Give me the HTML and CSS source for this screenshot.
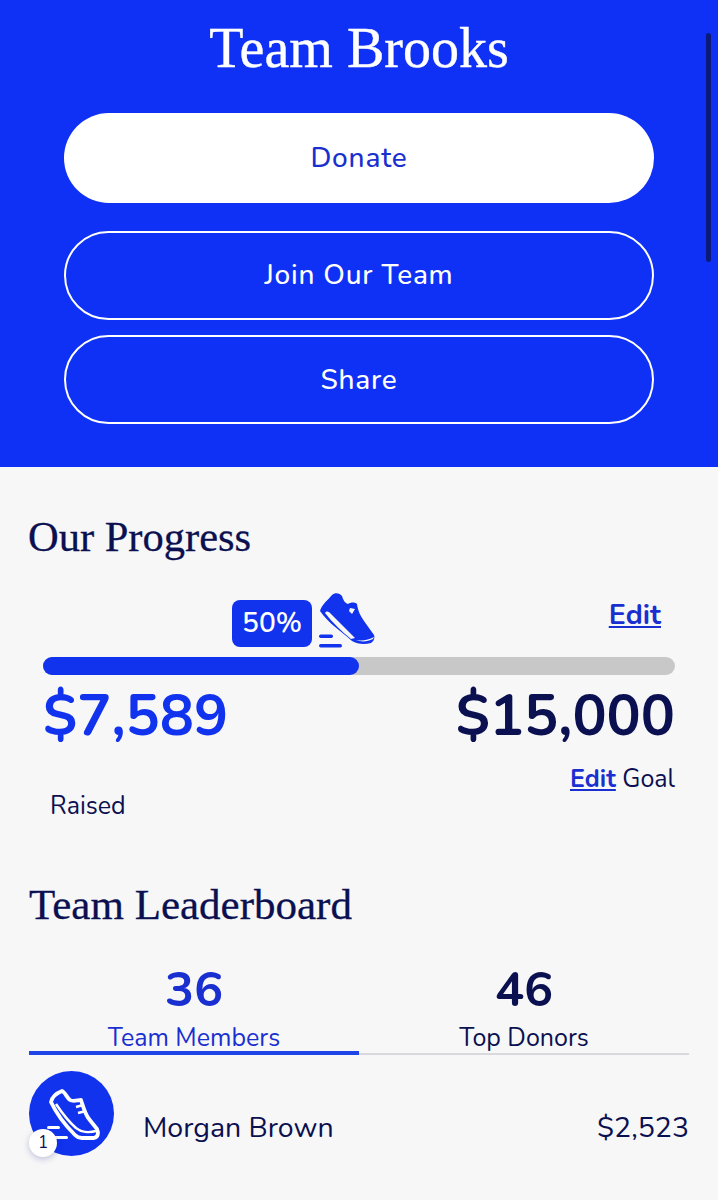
FILE: index.html
```html
<!DOCTYPE html>
<html lang="en">
<head>
<meta charset="utf-8">
<title>Team Brooks</title>
<link rel="stylesheet" href="styles.css">
</head>
<body>
<header class="hero">
  <h1 class="hero-title">Team Brooks</h1>
  <a class="btn btn-solid">Donate</a>
  <a class="btn btn-outline btn-join">Join Our Team</a>
  <a class="btn btn-outline btn-share">Share</a>
  <div class="scrollbar"></div>
</header>
<main class="content">
  <h2 class="section-title progress-title">Our Progress</h2>
  <div class="progress-head">
    <div class="marker">
      <span class="pct">50%</span>
      <svg class="shoe" viewBox="0 0 60 56" width="60" height="56">
        <path fill="#1133ee" d="M1 18 C3 11 9 7 13 2 C16 -1 21 0 23 3 C24 7 26 10 29 11 C32 9 36 9 38 11 C39 18 41 22 45 28 L55 42 C56 45 55 48 52 50 C45 52 38 51 33 48 C22 38 9 30 1 18 Z"/>
        <path fill="#f7f7f8" d="M6 20 C8 17 10 19 12 21 L36 45 L32 46 C22 38 14 30 6 20 Z"/>
        <path fill="#f7f7f8" d="M37 47 C43 48 50 47 55 44 L54 46 C48 49 42 49 37 47 Z"/>
        <path fill="#f7f7f8" d="M31 15 L36 16 L33 21 L30 18 Z"/>
        <rect x="0" y="41.500" width="14" height="3.500" rx="1.700" fill="#1133ee"/>
        <rect x="0" y="51" width="23" height="3.500" rx="1.700" fill="#1133ee"/>
      </svg>
    </div>
    <a class="edit edit-top">Edit</a>
  </div>
  <div class="bar"><div class="bar-fill"></div></div>
  <div class="amounts">
    <span class="amount amount-raised">$7,589</span>
    <span class="amount amount-goal">$15,000</span>
  </div>
  <div class="goal-note"><a class="edit">Edit</a> Goal</div>
  <div class="raised-note">Raised</div>
  <h2 class="section-title board-title">Team Leaderboard</h2>
  <div class="tabs">
    <div class="tab tab-active">
      <span class="tab-num">36</span>
      <span class="tab-label">Team Members</span>
    </div>
    <div class="tab">
      <span class="tab-num">46</span>
      <span class="tab-label">Top Donors</span>
    </div>
  </div>
  <div class="member">
    <div class="avatar">
      <svg class="avatar-shoe" viewBox="0 0 85 85" width="85" height="85">
        <path fill="none" stroke="#fff" stroke-width="3.800" stroke-linejoin="round" d="M22 31 C23 26 28 22 33 20 C36 21 38 27 41 29 C44 31 49 29 52 29 C54 35 56 43 60 48 L68 58 C70 62 69 66 65 67 L53 67 C50 67 48 66 46 64 C38 56 29 46 22 31 Z"/>
        <path fill="none" stroke="#fff" stroke-width="2.600" d="M27 33 C33 42 40 51 47 57 C52 61 60 62 67 60 M47 36 L54 34 M49 42 L57 40"/>
        <rect x="18" y="55" width="13" height="3" rx="1.500" fill="#fff"/>
        <rect x="25" y="65" width="14" height="3" rx="1.500" fill="#fff"/>
      </svg>
      <span class="rank">1</span>
    </div>
    <span class="member-name">Morgan Brown</span>
    <span class="member-amount">$2,523</span>
  </div>
</main>
</body>
</html>
```
FILE: styles.css
```css
* { box-sizing: border-box; }
html, body { margin: 0; padding: 0; }
body {
  width: 718px;
  height: 1200px;
  overflow: hidden;
  background: #f7f7f8;
  font-family: "Nunito", "Noto Sans", "Open Sans", sans-serif;
  color: #0b1050;
}
.hero {
  position: relative;
  height: 467px;
  padding: 14px 64px 0;
  background: #0f31f5;
  display: flex;
  flex-direction: column;
}
.hero-title {
  margin: 0 0 31px;
  height: 68px;
  font: 400 56px/68px "Liberation Serif", serif;
  -webkit-text-stroke: 0.4px #fff;
  color: #fff;
  text-align: center;
}
.btn {
  display: flex;
  align-items: center;
  justify-content: center;
  height: 89px;
  border-radius: 45px;
  font-size: 28px;
  font-weight: 500;
  letter-spacing: 0.8px;
}
.btn-solid { height: 90px; background: #fff; color: #1a2fd0; }
.btn-outline { border: 2px solid #fff; color: #fff; }
.btn-join { margin-top: 28px; padding-bottom: 1px; }
.btn-share { margin-top: 15px; }
.scrollbar {
  position: absolute;
  left: 706px;
  top: 33px;
  width: 5px;
  height: 229px;
  border-radius: 3px;
  background: #0b1a78;
}
.content { padding: 47px 29px 0; }
.section-title {
  margin: 0;
  height: 46px;
  font: 400 43px/46px "Liberation Serif", serif;
  -webkit-text-stroke: 0.3px #0b1050;
  color: #0b1050;
}
.progress-title { font-size: 42.500px; margin-left: -1px; }
.progress-head {
  display: flex;
  justify-content: space-between;
  align-items: flex-start;
  height: 62px;
  margin-top: 35px;
  padding-left: 203px;
  padding-right: 28px;
}
.marker { display: flex; align-items: flex-start; gap: 7px; margin-top: -2px; }
.pct {
  width: 80px;
  height: 47px;
  margin-top: 7px;
  border-radius: 8px;
  background: #1133ee;
  color: #fff;
  font-size: 28px;
  font-weight: 600;
  line-height: 47px;
  text-align: center;
}
.shoe { display: block; }
.edit {
  color: #1a2fd0;
  font-weight: 700;
  text-decoration: underline;
}
.edit-top { font-size: 28.500px; line-height: 36px; margin-top: 2px; }
.bar {
  height: 18px;
  margin: 0 14px;
  border-radius: 9px;
  background: #c8c8c8;
}
.bar-fill {
  width: 50%;
  height: 100%;
  border-radius: 9px;
  background: #1133ee;
}
.amounts {
  display: flex;
  justify-content: space-between;
  margin: 8px 14px 0;
  height: 66px;
  line-height: 66px;
  font-size: 57px;
  font-weight: 700;
}
.amount-raised { color: #1133ee; }
.goal-note {
  margin-top: 12px;
  padding-right: 14px;
  height: 36px;
  line-height: 36px;
  text-align: right;
  font-size: 25px;
}
.raised-note {
  margin: -8px 0 0 21px;
  height: 34px;
  line-height: 34px;
  font-size: 25px;
}
.board-title { margin-top: 59px; }
.tabs {
  display: flex;
  margin-top: 32px;
  border-bottom: 2px solid #d8d8de;
}
.tab {
  flex: 1;
  display: flex;
  flex-direction: column;
  align-items: center;
  height: 95px;
  margin-bottom: -2px;
}
.tab-active { border-bottom: 4px solid #1f44e8; color: #1a2fd0; }
.tab-num { font-size: 48.500px; line-height: 60px; font-weight: 700; }
.tab-label { font-size: 25px; line-height: 34px; margin-top: 1px; }
.member {
  display: flex;
  align-items: center;
  margin-top: 16px;
  font-size: 28.500px;
}
.avatar {
  position: relative;
  width: 85px;
  height: 85px;
  border-radius: 50%;
  background: #1133ee;
}
.avatar-shoe { display: block; }
.rank {
  position: absolute;
  left: 0;
  bottom: -1px;
  width: 28px;
  height: 28px;
  border-radius: 50%;
  background: #fff;
  box-shadow: 0 2px 6px rgba(20,30,120,.25);
  text-align: center;
  font-size: 17px;
  line-height: 28px;
}
.member-name { margin-left: 29px; flex: 1; margin-top: 28px; }
.member-amount { margin-top: 28px; }
```
